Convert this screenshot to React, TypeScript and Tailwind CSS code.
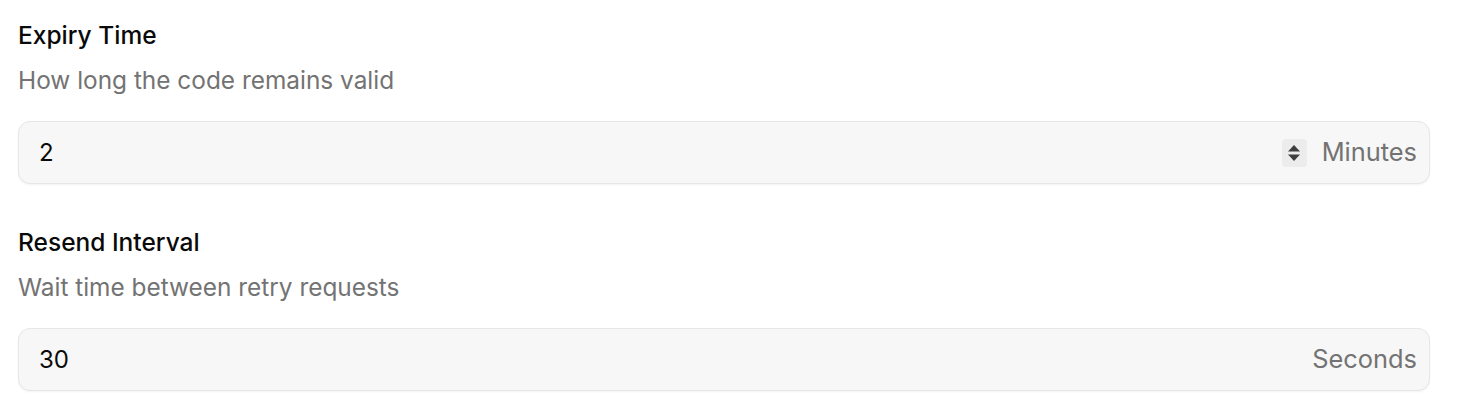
import React from "react";

function Field({
  label,
  desc,
  value,
  unit,
  spinner,
}: {
  label: string;
  desc: string;
  value: string;
  unit: string;
  spinner?: boolean;
}) {
  return (
    <div className="flex flex-col">
      <div className="text-[24.5px] leading-[32px] font-medium text-[#0a0a0a]">{label}</div>
      <div className="mt-[13px] text-[24.4px] leading-[32px] text-[#737373]">{desc}</div>
      <div className="mt-[25px] h-[63px] flex items-center rounded-[12px] border border-[#e6e6e6] bg-[#f7f7f7] shadow-[0_1px_2px_rgba(0,0,0,0.05)] pl-[20px] pr-[12px]">
        <div className="flex-1 text-[24px] text-[#0a0a0a]">{value}</div>
        {spinner && (
          <div className="mr-[15px] w-[25px] h-[28px] rounded-[4px] bg-[#ececec] flex items-center justify-center">
            <svg width="14" height="20" viewBox="0 0 14 20">
              <path d="M7 2 L13 8.5 L1 8.5 Z" fill="#3f3f3f" />
              <path d="M7 18 L13 11.5 L1 11.5 Z" fill="#3f3f3f" />
            </svg>
          </div>
        )}
        <div className="text-[25.4px] text-[#737373]">{unit}</div>
      </div>
    </div>
  );
}

export default function App() {
  return (
    <div
      className="w-[1458px] h-[412px] bg-white pl-[18px] pr-[28px] pt-[19px] flex flex-col gap-[42px]"
      style={{ fontFamily: "Inter, 'Noto Sans', sans-serif" }}
    >
      <Field
        label="Expiry Time"
        desc="How long the code remains valid"
        value="2"
        unit="Minutes"
        spinner
      />
      <Field
        label="Resend Interval"
        desc="Wait time between retry requests"
        value="30"
        unit="Seconds"
      />
    </div>
  );
}
